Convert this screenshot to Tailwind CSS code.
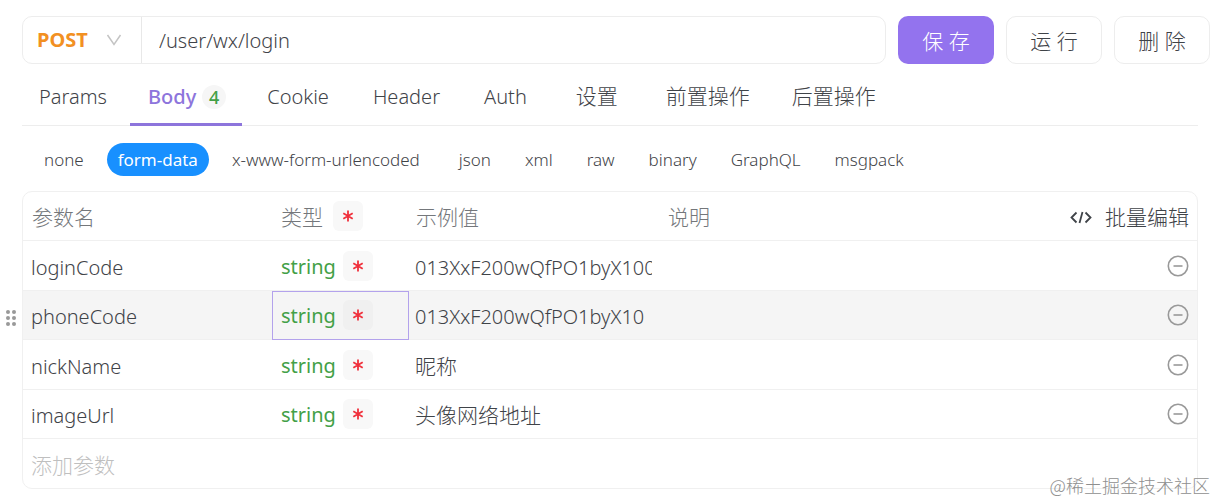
<!DOCTYPE html>
<html lang="zh-CN">
<head>
  <meta charset="UTF-8" />
  <meta name="viewport" content="width=device-width, initial-scale=1" />
  <title>POST /user/wx/login</title>
  <script src="https://cdn.jsdelivr.net/npm/@tailwindcss/browser@4"></script>
</head>
<body class="bg-white font-['Noto_Sans','Noto_Sans_CJK_SC',sans-serif] text-[20px] font-light text-[#3f4348]">

  <main class="relative pl-[22px] pr-[6px] pt-4 pb-3">

    <!-- Request line -->
    <form class="flex gap-3" onsubmit="return false">
      <div class="flex h-12 flex-1 rounded-[10px] border border-[#ededed]">
        <div class="relative w-[119px] border-r border-[#e8e8e8]">
          <select aria-label="Method" class="h-full w-full appearance-none pl-[14px] font-bold text-[#f29022] outline-none">
            <option>POST</option>
            <option>GET</option>
          </select>
          <svg class="pointer-events-none absolute right-[19px] top-[17px] h-3 w-4" viewBox="0 0 16 12" fill="none" stroke="#c4c4c4" stroke-width="1.5"><path d="M1.500 1 8 10.500l6.500-9.500" /></svg>
        </div>
        <input aria-label="URL" type="text" value="/user/wx/login" class="min-w-0 flex-1 px-[17px] pt-[2px] outline-none" />
      </div>
      <button class="w-24 rounded-[10px] bg-[#9373ee] pt-1 text-[21px] text-white">保 存</button>
      <button class="w-24 rounded-[10px] border border-[#ededed] pt-1 text-[21px]">运 行</button>
      <button class="w-24 rounded-[10px] border border-[#ededed] pt-1 text-[21px]">删 除</button>
    </form>

    <div class="mr-3">
      <!-- Tabs -->
      <nav class="flex h-[62px] gap-[6px] border-b border-[#ededed] whitespace-nowrap">
        <a href="#" class="px-[17px] pt-[18px]">Params</a>
        <a href="#" class="-mb-px flex gap-[6px] border-b-3 border-[#8d75dc] pl-[18px] pr-4 pt-[18px] font-medium text-[#8d75dc]">Body
          <span class="mt-[3px] flex size-6 items-center justify-center rounded-full bg-[#f6f6f6] text-[18px] text-[#43a047]">4</span>
        </a>
        <a href="#" class="px-[19px] pt-[18px]">Cookie</a>
        <a href="#" class="px-[19px] pt-[18px]">Header</a>
        <a href="#" class="px-[19px] pt-[18px]">Auth</a>
        <a href="#" class="px-6 pt-[17px] text-[21px]">设置</a>
        <a href="#" class="px-[18px] pt-[17px] text-[21px]">前置操作</a>
        <a href="#" class="px-[18px] pt-[17px] text-[21px]">后置操作</a>
      </nav>

      <!-- Body type -->
      <div role="radiogroup" aria-label="Body type" class="flex gap-3 pb-[15px] pl-[11px] pt-[17px] text-[17px] leading-[33px]">
        <label class="relative rounded-full px-[11px]"><input type="radio" name="type" class="sr-only" />none</label>
        <label class="relative rounded-full bg-[#1890ff] px-[11px] font-normal text-white"><input type="radio" name="type" class="sr-only" checked />form-data</label>
        <label class="relative rounded-full px-[11px] pr-4"><input type="radio" name="type" class="sr-only" />x-www-form-urlencoded</label>
        <label class="relative rounded-full px-[11px]"><input type="radio" name="type" class="sr-only" />json</label>
        <label class="relative rounded-full px-[11px]"><input type="radio" name="type" class="sr-only" />xml</label>
        <label class="relative rounded-full px-[11px]"><input type="radio" name="type" class="sr-only" />raw</label>
        <label class="relative rounded-full px-[11px]"><input type="radio" name="type" class="sr-only" />binary</label>
        <label class="relative rounded-full px-[11px]"><input type="radio" name="type" class="sr-only" />GraphQL</label>
        <label class="relative rounded-full px-[11px]"><input type="radio" name="type" class="sr-only" />msgpack</label>
      </div>

      <!-- Params table -->
      <div class="rounded-[10px] border border-[#f0f0f0]">
        <table class="w-full table-fixed border-separate border-spacing-0 text-left">
          <thead class="text-[21px] text-[#74777b]">
            <tr class="h-[49px] *:border-b *:border-[#f0f0f0] *:font-light">
              <th class="w-[249px] pl-[9px] pt-1">参数名</th>
              <th class="w-[137px] pl-[9px]">
                <div class="flex items-center gap-[10px]">
                  <span class="pt-1">类型</span>
                  <span class="flex size-[30px] items-center justify-center rounded-md bg-[#f8f8f8]"><svg class="size-3" viewBox="0 0 12 12" stroke="#f0303c" stroke-width="1.800"><path d="M6 .5v11M1.300 3.200l9.400 5.600M10.700 3.200 1.300 8.800" /></svg></span>
                </div>
              </th>
              <th class="w-[251px] pl-[7px] pt-1">示例值</th>
              <th class="pl-2 pt-1">说明</th>
              <th class="w-[140px] pr-2 pt-1">
                <button class="flex w-full items-center justify-end gap-[13px] whitespace-nowrap text-[#3f4348]">
                  <svg class="h-4 w-[22px]" viewBox="0 0 22 16" fill="none" stroke="currentColor" stroke-width="1.800"><path d="M6.500 2.500 1.500 7.500l5 5M15.500 2.500l5 5-5 5M12.500 2l-3 11" /></svg>
                  批量编辑
                </button>
              </th>
            </tr>
          </thead>
          <tbody id="rows"></tbody>
        </table>
      </div>
    </div>

    <p class="absolute right-[6px] top-[472px] font-['Noto_Sans_CJK_SC',sans-serif] text-[18px] leading-[26px] text-[#8f8f8f]">@稀土掘金技术社区</p>
  </main>

  <script>
    const params = [
      { name: 'loginCode', value: '013XxF200wQfPO1byX1000' },
      { name: 'phoneCode', value: '013XxF200wQfPO1byX10', active: true },
      { name: 'nickName', value: '昵称' },
      { name: 'imageUrl', value: '头像网络地址' },
    ];

    const handle = `
      <button aria-label="Drag" class="absolute -left-[18px] top-[18px]">
        <svg class="h-[18px] w-3" viewBox="0 0 12 18" fill="#999"><circle cx="3" cy="3" r="2" /><circle cx="9" cy="3" r="2" /><circle cx="3" cy="9" r="2" /><circle cx="9" cy="9" r="2" /><circle cx="3" cy="15" r="2" /><circle cx="9" cy="15" r="2" /></svg>
      </button>`;

    const tbody = document.getElementById('rows');

    params.forEach(p => {
      const tr = document.createElement('tr');
      tr.className = 'odd:h-[50px] even:h-[49px] *:border-b *:border-[#f0f0f0]' + (p.active ? ' bg-[#f5f5f5]' : '');
      const cjk = /[^\x00-\x7f]/.test(p.value);
      tr.innerHTML = `
        <td class="relative">
          ${p.active ? handle : ''}
          <input aria-label="参数名" type="text" value="${p.name}" class="w-full px-2 pt-1 outline-none" />
        </td>
        <td class="pl-[9px] ${p.active ? 'outline outline-[#b3a2ec] -outline-offset-1' : ''}">
          <div class="flex items-center gap-[7px]">
            <button class="pt-[2px] font-normal text-[#43a047]">string</button>
            <button aria-label="必需" class="flex size-[30px] items-center justify-center rounded-md ${p.active ? 'bg-[#f0f0f0]' : 'bg-[#f8f8f8]'}"><svg class="size-3" viewBox="0 0 12 12" stroke="#f0303c" stroke-width="1.800"><path d="M6 .5v11M1.300 3.200l9.400 5.600M10.700 3.200 1.300 8.800" /></svg></button>
          </div>
        </td>
        <td class="pl-[6px] pr-2"><input aria-label="示例值" type="text" value="${p.value}" class="w-full pt-1 outline-none ${cjk ? 'text-[21px]' : ''}" /></td>
        <td><input aria-label="说明" type="text" class="w-full px-2 outline-none" /></td>
        <td class="pr-2">
          <button aria-label="删除" class="ml-auto block"><svg class="size-[22px]" viewBox="0 0 22 22" fill="none" stroke="#999" stroke-width="1.600"><circle cx="11" cy="11" r="9.700" /><path d="M6.500 11h9" /></svg></button>
        </td>
      `;
      tbody.appendChild(tr);
    });

    // trailing empty row for a new param
    const last = document.createElement('tr');
    last.className = 'h-[49px]';
    last.innerHTML = `<td colspan="5"><input aria-label="添加参数" type="text" placeholder="添加参数" class="w-full px-2 pt-1 text-[21px] outline-none placeholder:text-[#bfbfbf]" /></td>`;
    tbody.appendChild(last);
  </script>

</body>
</html>
